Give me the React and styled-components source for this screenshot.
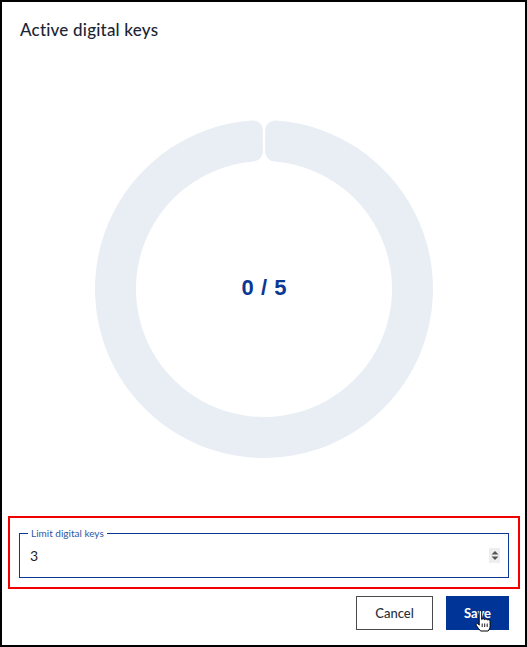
import React from "react";
import styled, { createGlobalStyle } from "styled-components";

const GlobalStyle = createGlobalStyle`
  html, body {
    margin: 0;
    padding: 0;
    background: #ffffff;
  }
  body {
    font-family: Lato, "Open Sans", sans-serif;
  }
`;

// annular sector with rounded corners, angles in degrees clockwise from top
const ringPath = (cx, cy, R, r, start, end, c) => {
  const rad = (d) => (d * Math.PI) / 180;
  const pt = (rho, deg) => [
    cx + rho * Math.sin(rad(deg)),
    cy - rho * Math.cos(rad(deg)),
  ];
  const dO = Math.sqrt((R - c) ** 2 - c ** 2);
  const dI = Math.sqrt((r + c) ** 2 - c ** 2);
  const aO = (Math.asin(c / (R - c)) * 180) / Math.PI;
  const aI = (Math.asin(c / (r + c)) * 180) / Math.PI;
  const f = (p) => `${p[0].toFixed(2)} ${p[1].toFixed(2)}`;
  const large = end - start > 180 ? 1 : 0;
  return [
    `M ${f(pt(dO, start))}`,
    `A ${c} ${c} 0 0 1 ${f(pt(R, start + aO))}`,
    `A ${R} ${R} 0 ${large} 1 ${f(pt(R, end - aO))}`,
    `A ${c} ${c} 0 0 1 ${f(pt(dO, end))}`,
    `L ${f(pt(dI, end))}`,
    `A ${c} ${c} 0 0 1 ${f(pt(r, end - aI))}`,
    `A ${r} ${r} 0 ${large} 0 ${f(pt(r, start + aI))}`,
    `A ${c} ${c} 0 0 1 ${f(pt(dI, start))}`,
    "Z",
  ].join(" ");
};

const Gauge = ({ used, total }) => {
  const size = 340;
  const mid = size / 2;
  return (
    <GaugeBox>
      <svg width={size} height={size} viewBox={`0 0 ${size} ${size}`}>
        <path
          d={ringPath(mid, mid, 169, 128, 0.45, 359.55, 10)}
          fill="#e9eef5"
        />
      </svg>
      <GaugeLabel>
        {used} / {total}
      </GaugeLabel>
    </GaugeBox>
  );
};

const SpinIcon = () => (
  <Spinner>
    <svg width="8" height="11" viewBox="0 0 8 11">
      <path d="M4 1 L7.5 4.5 H0.5 Z" fill="#555" />
      <path d="M4 10 L7.5 6.5 H0.5 Z" fill="#555" />
    </svg>
  </Spinner>
);

const HandCursor = () => (
  <Cursor>
    <svg width="17" height="24" viewBox="0 0 17 24">
      <path
        d="M5 1.5c1 0 1.7.7 1.7 1.7v7.3c.3-.9 2.7-1 3 .2.4-1 2.6-.9 2.8.4.5-.8 2.6-.6 2.6 1.1v4.6c0 2.4-.9 3.9-2 5.2H5.6C4.4 20.5 2.6 18.6 1.4 16.6.8 15.5 1.3 14.4 2.4 14.6c.8.1 1.3.8 1.8 1.6V3.2c0-1 .1-1.7.8-1.7z"
        fill="#ffffff"
        stroke="#000000"
        strokeWidth="1"
        strokeLinejoin="round"
      />
      <path d="M7.2 14.5v3.5M9.7 14.5v3.5M12.2 14.5v3.5" stroke="#000" strokeWidth="0.9" />
    </svg>
  </Cursor>
);

const App = () => {
  return (
    <>
      <GlobalStyle />
      <Frame>
        <Header>
          <Title>Active digital keys</Title>
        </Header>
        <ChartArea>
          <Gauge used={0} total={5} />
        </ChartArea>
        <Highlight>
          <Field>
            <Legend>Limit digital keys</Legend>
            <InputRow>
              <ValueInput type="text" defaultValue="3" />
              <SpinIcon />
            </InputRow>
          </Field>
        </Highlight>
        <Actions>
          <Button>Cancel</Button>
          <Button primary>
            Save
            <HandCursor />
          </Button>
        </Actions>
      </Frame>
    </>
  );
};

const Frame = styled.div`
  width: 527px;
  height: 647px;
  box-sizing: border-box;
  border: 2px solid #000000;
  display: flex;
  flex-direction: column;
  background: #ffffff;
`;

const Header = styled.div`
  padding: 17px 18px 0;
  height: 40px;
  box-sizing: border-box;
`;

const Title = styled.h2`
  margin: 0;
  font-size: 17px;
  font-weight: 500;
  color: #1b2536;
  letter-spacing: 0.2px;
`;

const ChartArea = styled.div`
  flex: 1;
  display: flex;
  align-items: center;
  justify-content: center;
  padding-top: 20px;
`;

const GaugeBox = styled.div`
  position: relative;
  width: 340px;
  height: 340px;
  margin-left: 1px;

  svg {
    display: block;
  }
`;

const GaugeLabel = styled.div`
  position: absolute;
  inset: 0;
  display: flex;
  align-items: center;
  justify-content: center;
  font-family: "Liberation Sans", Arial, sans-serif;
  font-weight: 700;
  font-size: 22px;
  color: #0b3893;
  word-spacing: 1px;
  padding-bottom: 2px;
`;

const Highlight = styled.div`
  margin: 0 5px 0 6px;
  border: 2px solid #f20000;
  padding: 10px 9px 9px 9px;
`;

const Field = styled.fieldset`
  margin: 0;
  padding: 0 8px 0 10px;
  height: 50px;
  box-sizing: border-box;
  border: 1px solid #0b3893;
  border-radius: 0;
  display: flex;
  align-items: center;
  position: relative;
`;

const Legend = styled.legend`
  padding: 0 3px;
  margin-left: -2px;
  font-size: 10px;
  color: #2f55a5;
  line-height: 10px;
`;

const InputRow = styled.div`
  display: flex;
  align-items: center;
  width: 100%;
  margin-top: -4px;
`;

const ValueInput = styled.input`
  flex: 1;
  border: none;
  outline: none;
  padding: 0;
  font-family: Lato, "Open Sans", sans-serif;
  font-size: 14px;
  color: #1e1e1e;
  background: transparent;
`;

const Spinner = styled.div`
  width: 11px;
  height: 15px;
  background: #eeeeee;
  display: flex;
  align-items: center;
  justify-content: center;
`;

const Actions = styled.div`
  display: flex;
  justify-content: flex-end;
  gap: 13px;
  padding: 7px 16px 15px 0;
`;

const Button = styled.button`
  position: relative;
  height: 34px;
  min-width: ${(p) => (p.primary ? "63px" : "77px")};
  padding: 0 14px;
  box-sizing: border-box;
  font-family: Lato, "Open Sans", sans-serif;
  font-size: 13px;
  font-weight: ${(p) => (p.primary ? 700 : 500)};
  color: ${(p) => (p.primary ? "#ffffff" : "#2a2f3a")};
  background: ${(p) => (p.primary ? "#003497" : "#ffffff")};
  border: 1px solid ${(p) => (p.primary ? "#003497" : "#4a4a4a")};
  border-radius: 0;
  cursor: pointer;
`;

const Cursor = styled.span`
  position: absolute;
  left: 28px;
  top: 12px;
  pointer-events: none;

  svg {
    display: block;
  }
`;

export default App;
